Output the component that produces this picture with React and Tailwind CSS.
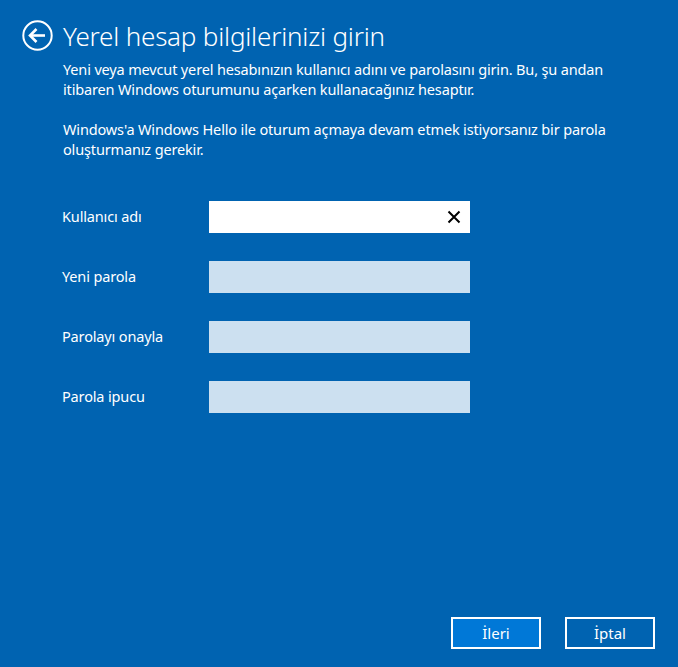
export default function App() {
  const rows = [
    { label: "Kullanıcı adı", active: true },
    { label: "Yeni parola" },
    { label: "Parolayı onayla" },
    { label: "Parola ipucu" },
  ];
  return (
    <div className="w-[678px] h-[667px] bg-[#0063b1] text-white flex flex-col overflow-hidden font-['Noto_Sans',sans-serif]">
      <div className="flex items-center pt-[20px] pl-[22px] gap-[10px]">
        <svg width="31" height="31" viewBox="0 0 31 31" className="shrink-0">
          <circle cx="15.5" cy="15.5" r="14.2" fill="none" stroke="white" strokeWidth="2" />
          <path d="M8 15.5 H23" stroke="white" strokeWidth="2.6" fill="none" />
          <path d="M14.5 9 L8 15.5 L14.5 22" stroke="white" strokeWidth="2.6" fill="none" strokeLinejoin="miter" />
        </svg>
        <h1 className="text-[26px] leading-[30px] font-light tracking-[-0.2px]">Yerel hesap bilgilerinizi girin</h1>
      </div>
      <div className="pl-[63px] pr-[40px] pt-[8px] text-[14.5px] leading-[20px] tracking-[-0.15px]">
        <p>
          Yeni veya mevcut yerel hesabınızın kullanıcı adını ve parolasını girin. Bu, şu andan
          <br />
          itibaren Windows oturumunu açarken kullanacağınız hesaptır.
        </p>
        <p className="mt-[20px]">
          Windows'a Windows Hello ile oturum açmaya devam etmek istiyorsanız bir parola
          <br />
          oluşturmanız gerekir.
        </p>
      </div>
      <div className="pl-[62px] pt-[42px] flex flex-col gap-[28px]">
        {rows.map((r) => (
          <div key={r.label} className="flex items-center">
            <div className="w-[147px] text-[14.5px] tracking-[-0.15px]">{r.label}</div>
            {r.active ? (
              <div className="w-[261px] h-[32px] bg-white flex items-center justify-end pr-[9px]">
                <svg width="14" height="14" viewBox="0 0 14 14">
                  <path d="M1.5 1.5 L12.5 12.5 M12.5 1.5 L1.5 12.5" stroke="black" strokeWidth="2" fill="none" />
                </svg>
              </div>
            ) : (
              <div className="w-[261px] h-[32px] bg-[#cce0f0]" />
            )}
          </div>
        ))}
      </div>
      <div className="flex-1" />
      <div className="flex justify-end gap-[24px] pr-[23px] pb-[18px]">
        <button className="w-[90px] h-[32px] border-2 border-white bg-[#0078d7] text-[15px] text-white">İleri</button>
        <button className="w-[90px] h-[32px] border-2 border-white bg-[#0063b1] text-[15px] text-white">İptal</button>
      </div>
    </div>
  );
}
